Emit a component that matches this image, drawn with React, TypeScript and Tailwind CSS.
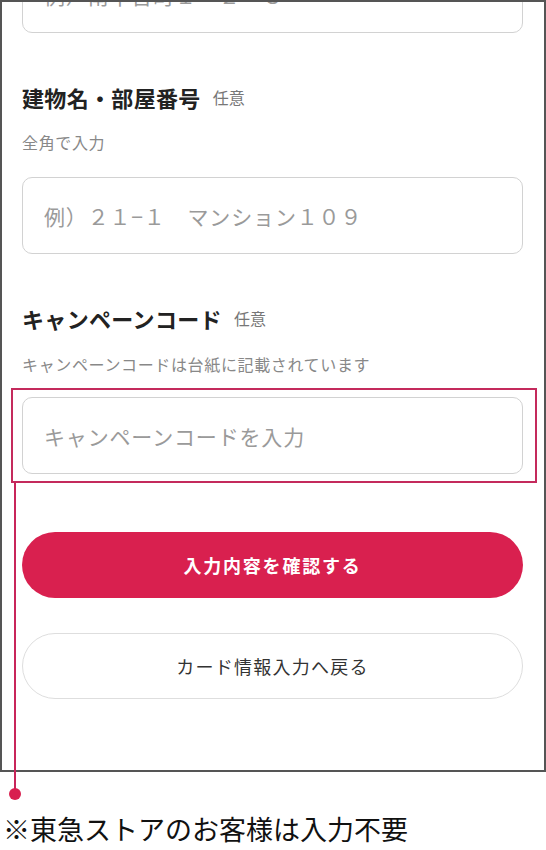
import React from 'react';

const font = "font-['Noto_Sans_CJK_JP','Noto_Sans',sans-serif]";

function FieldLabel({ title }: { title: string }) {
  return (
    <div className="flex items-center">
      <span className="text-[22px] leading-[30px] font-bold tracking-[0.015em] text-[#222]">{title}</span>
      <span className="ml-[12px] text-[16px] leading-[30px] text-[#777]">任意</span>
    </div>
  );
}

function TextField({ placeholder }: { placeholder: string }) {
  return (
    <input
      type="text"
      placeholder={placeholder}
      className="block h-[77px] w-full rounded-[10px] border border-[#d2d2d2] bg-white pl-[21px] text-[21px] tracking-[0.04em] text-[#222] outline-none placeholder:text-[#9a9a9a]"
    />
  );
}

export default function App() {
  return (
    <div className={`relative h-[850px] w-[546px] overflow-hidden bg-white ${font}`}>
      {/* phone frame */}
      <div className="h-[772px] overflow-hidden border-2 border-[#555]">
        <div className="-mt-[46px] pl-[20px] pr-[21px]">
          <TextField placeholder="例）南平台町１－２－３" />

          <div className="mt-[49px]">
            <FieldLabel title="建物名・部屋番号" />
          </div>
          <p className="mt-[19px] text-[16px] leading-[22px] tracking-[0.04em] text-[#888]">全角で入力</p>
          <div className="mt-[24px]">
            <TextField placeholder="例）２１−１　マンション１０９" />
          </div>

          <div className="mt-[49px]">
            <FieldLabel title="キャンペーンコード" />
          </div>
          <p className="mt-[20px] text-[16px] leading-[22px] tracking-[0.04em] text-[#888]">
            キャンペーンコードは台紙に記載されています
          </p>
          <div className="mt-[22px]">
            <TextField placeholder="キャンペーンコードを入力" />
          </div>

          <button className="mt-[58px] flex h-[66px] w-full items-center justify-center rounded-full bg-[#d9204f] text-[18px] font-bold tracking-[0.1em] text-white">
            入力内容を確認する
          </button>
          <button className="mt-[35px] flex h-[66px] w-full items-center justify-center rounded-full border border-[#dedede] bg-white text-[18px] tracking-[0.07em] text-[#333]">
            カード情報入力へ戻る
          </button>
        </div>
      </div>

      <p className="mt-[37px] pl-[3px] text-[27px] leading-[40px] text-[#111]">※東急ストアのお客様は入力不要</p>

      {/* annotation overlay */}
      <div className="pointer-events-none absolute left-[11px] top-[388px] h-[95px] w-[526px] border-2 border-[#c42a5c]" />
      <div className="pointer-events-none absolute left-[14px] top-[483px] h-[311px] w-[2px] bg-[#c8255a]" />
      <div className="pointer-events-none absolute left-[9px] top-[788px] h-[12px] w-[12px] rounded-full bg-[#d81f4f]" />
    </div>
  );
}
